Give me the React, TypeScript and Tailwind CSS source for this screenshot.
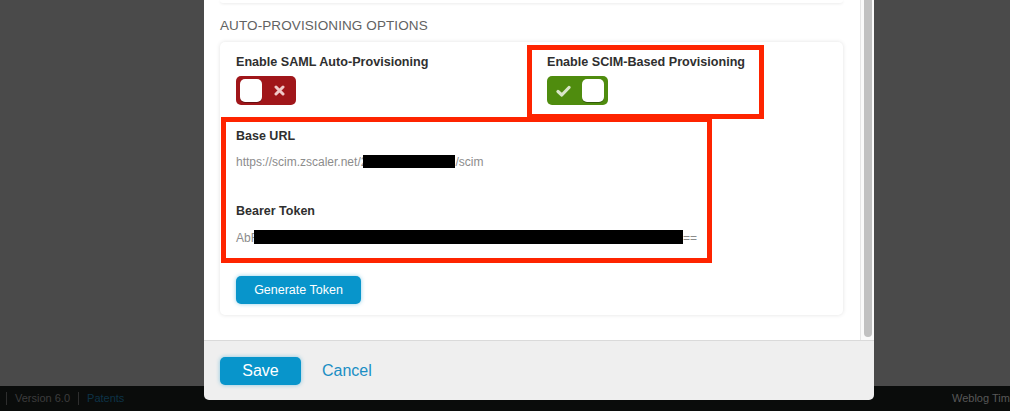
import React from 'react';

// Toggle switch used on the provisioning card
function Toggle({ on }: { on: boolean }) {
  if (on) {
    return (
      <div className="w-[61px] h-[29px] rounded-[5px] bg-[#4f8c0e] flex items-center pl-[9px] pr-[4px] justify-between">
        <svg width="15" height="12" viewBox="0 0 15 12">
          <path d="M2 6.5 L5.8 10 L13 2.5" fill="none" stroke="#d9e6c8" strokeWidth="3.2" strokeLinecap="round" strokeLinejoin="round" />
        </svg>
        <div className="w-[22px] h-[23px] rounded-[5px] bg-white shadow-[0_1px_0_rgba(0,0,0,0.35)]" />
      </div>
    );
  }
  return (
    <div className="w-[60px] h-[29px] rounded-[5px] bg-[#a0161a] flex items-center pl-[4px] pr-[11px] justify-between">
      <div className="w-[22px] h-[23px] rounded-[5px] bg-white shadow-[0_1px_0_rgba(0,0,0,0.35)]" />
      <svg width="11" height="11" viewBox="0 0 11 11">
        <path d="M2 2 L9 9 M9 2 L2 9" fill="none" stroke="#f0c9c9" strokeWidth="3" strokeLinecap="round" />
      </svg>
    </div>
  );
}

export default function App() {
  return (
    <div className="relative w-[1010px] h-[411px] overflow-hidden flex flex-col font-['Liberation_Sans',Arial,sans-serif]">
      <div className="flex-1 bg-[#4a4a4a]" />
      <div className="h-[25px] bg-[#0a0c0b] flex items-center text-[11px]">
        <span className="ml-[6px] w-px h-[13px] bg-[#2e2e2e]" />
        <span className="ml-[8px] text-[#3d3d3d]">Version 6.0</span>
        <span className="ml-[8px] w-px h-[13px] bg-[#2e2e2e]" />
        <span className="ml-[8px] text-[#0d3347]">Patents</span>
        <span className="ml-auto w-[58px] whitespace-nowrap text-[#585858]">Weblog Tim</span>
      </div>

      {/* modal dialog */}
      <div className="absolute left-[204px] top-0 w-[670px] h-[400px] rounded-b-[5px] overflow-hidden flex flex-col">
        <div className="h-[340px] flex bg-white">
          <div className="flex-1 pl-4 pr-[17px]">
            <div className="h-[3px] rounded-b-[5px] bg-white shadow-[0_1px_3px_rgba(0,0,0,0.08)]" />
            <div className="mt-[15px] h-[16px] leading-[16px] text-[13.5px] text-[#626262] tracking-[0.1px]">
              AUTO-PROVISIONING OPTIONS
            </div>
            <div className="mt-[8px] bg-white rounded-[5px] shadow-[0_0_4px_rgba(0,0,0,0.12)] pb-[11px]">
              <div className="flex pt-[3px]">
                <div className="w-[307px] pl-4 pt-[9px]">
                  <div className="text-[12.6px] leading-[16px] font-bold text-[#2f2f2f]">Enable SAML Auto-Provisioning</div>
                  <div className="mt-[6px]">
                    <Toggle on={false} />
                  </div>
                </div>
                <div className="w-[237px] h-[74px] border-[5px] border-[#fe2400] pl-[15px] pt-[4px]">
                  <div className="text-[12.6px] leading-[16px] font-bold text-[#2f2f2f]">Enable SCIM-Based Provisioning</div>
                  <div className="mt-[6px]">
                    <Toggle on={true} />
                  </div>
                </div>
              </div>
              <div className="ml-[1px] mt-[-2px] w-[491px] h-[146px] border-[5px] border-[#fe2400] pl-[10px] pt-[6px]">
                <div className="text-[12.5px] leading-[16px] font-bold text-[#2f2f2f]">Base URL</div>
                <div className="mt-[10px] text-[12px] leading-[16px] text-[#8c8c8c] whitespace-nowrap">
                  https://scim.zscaler.net/2
                  <span className="inline-block w-[92px] h-[13px] bg-black -ml-[4px] align-[-2px]" />
                  /scim
                </div>
                <div className="mt-[33px] text-[12.5px] leading-[16px] font-bold text-[#2f2f2f]">Bearer Token</div>
                <div className="mt-[11px] text-[12px] leading-[16px] text-[#8c8c8c] whitespace-nowrap">
                  AbF
                  <span className="inline-block w-[429px] h-[14px] bg-black -ml-[4px] align-[-2px]" />
                  ==
                </div>
              </div>
              <button className="ml-4 mt-[13px] w-[125px] h-[28px] rounded-[5px] bg-[#0895cb] text-white text-[12.5px] shadow-[0_0_4px_rgba(8,149,203,0.45)]">
                Generate Token
              </button>
            </div>
          </div>
          <div className="w-[14px] border-l border-[#e6e6e6] bg-[#fafafa] pl-[3px]">
            <div className="w-[8px] h-[337px] rounded-b-[4px] bg-[#c1c1c1]" />
          </div>
        </div>
        <div className="flex-1 bg-[#efefef] border-t border-[#dadada] flex items-start pt-4 pl-4">
          <button className="w-[81px] h-[28px] rounded-[5px] bg-[#0895cb] text-white text-[16px] shadow-[0_0_4px_rgba(8,149,203,0.45)]">
            Save
          </button>
          <span className="ml-[21px] mt-[4px] text-[16px] leading-[20px] text-[#1a8ec4]">Cancel</span>
        </div>
      </div>
    </div>
  );
}
